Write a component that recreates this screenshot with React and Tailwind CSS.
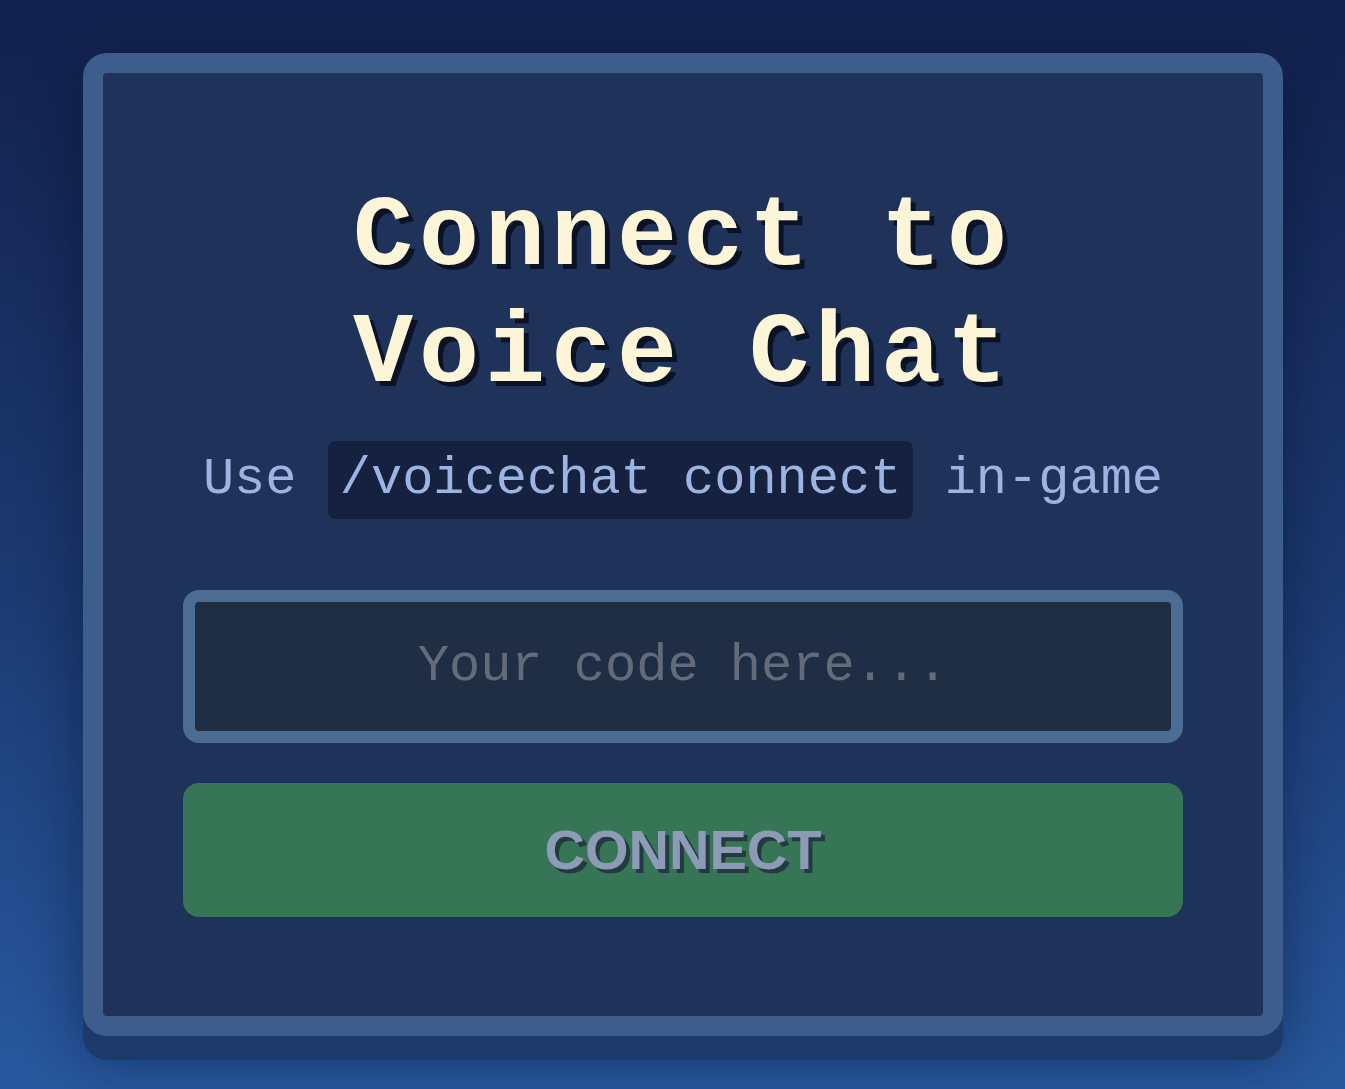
export default function App() {
  return (
    <div className="min-h-screen w-full flex items-center bg-[linear-gradient(180deg,#12214d_0%,#1c3a72_55%,#28599f_100%)] font-['Liberation_Mono','Courier_New',monospace]">
      <div className="ml-[83px] w-[1200px] h-[983px] rounded-[24px] border-[20px] border-[#3d5e8c] bg-[#1f325a] shadow-[0_24px_0_#1e3a6a,0_24px_60px_rgba(5,12,35,0.45)] flex flex-col items-center px-[80px] pt-[106px]">
        <h1 className="text-[100px] leading-[117px] font-bold tracking-[6px] text-center text-[#fdf5d8] [text-shadow:5px_5px_0_#0b1226]">
          Connect to
          <br />
          Voice Chat
        </h1>
        <p className="mt-[28px] text-[52px] leading-[78px] text-[#9cb4e2] whitespace-pre">
          Use <code className="font-['Liberation_Mono',monospace] bg-[#16213f] rounded-[8px] px-[12px] py-0 inline-block">/voicechat connect</code> in-game
        </p>
        <div className="mt-[71px] w-full rounded-[16px] border-[12px] border-[#4d6c94] bg-[#1f2d45] h-[153px] flex items-center justify-center">
          <input
            className="w-full h-full bg-transparent text-center text-[52px] text-[#e5e7eb] placeholder:text-[#646b78] outline-none font-['Liberation_Mono',monospace]"
            placeholder="Your code here..."
          />
        </div>
        <button className="mt-[40px] w-full h-[134px] rounded-[16px] bg-[#367555] text-[56px] font-bold text-[#8d9bb6] font-['Liberation_Sans',Arial,sans-serif] [text-shadow:4px_4px_0_#233a40]">
          CONNECT
        </button>
      </div>
    </div>
  );
}
